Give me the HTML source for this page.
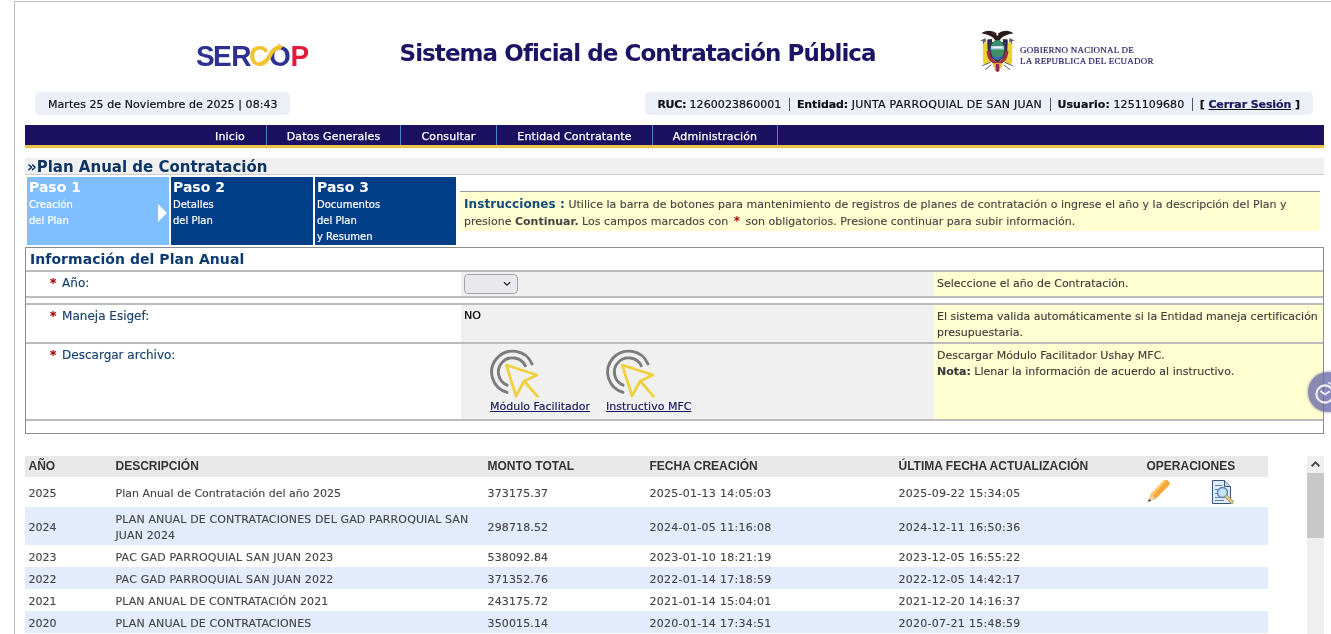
<!DOCTYPE html>
<html lang="es">
<head>
<meta charset="utf-8">
<title>Sistema Oficial de Contratación Pública</title>
<style>
*{box-sizing:border-box}
html,body{margin:0;padding:0;background:#fff;overflow:hidden}
body{width:1331px;height:634px;position:relative;will-change:transform;font-family:"DejaVu Sans","Liberation Sans",sans-serif;font-size:11px;color:#333}
a{color:#1a1a6e}
#wrap{position:absolute;left:14px;top:1px;width:1400px;height:700px;border-left:1px solid #bdbdbd;border-top:1px solid #bdbdbd}
.abs{position:absolute}
#title{left:399.5px;top:38px;margin:0;font:bold 23px/30px "DejaVu Sans","Liberation Sans",sans-serif;color:#1b1464;letter-spacing:-0.93px;white-space:nowrap}
#gob{left:1020px;top:45px;font:9px/10.5px "Liberation Serif",serif;color:#231b63;white-space:nowrap;letter-spacing:.22px;-webkit-text-stroke:.2px #231b63}
.pill{top:92px;height:23px;background:#ebeff8;border-radius:5px;line-height:25px;font-size:11px;color:#111;white-space:nowrap;padding:0 13px;letter-spacing:.07px;-webkit-text-stroke:.2px #111}
#pill1{left:35px;width:255px}
#pill2{left:645px;width:668px;padding-left:12.5px}
#pill2 b{font-weight:bold}
#pill2 .sep{display:inline-block;width:1px;height:13px;background:#555;vertical-align:-3px;margin:0 3.43px 0 3.93px}
#nav{left:25px;top:125px;width:1299px;height:23px;background:#1c1061;border-bottom:3px solid #eec24f;box-shadow:0 1px 0 #fff5d8;margin:0;padding:0;list-style:none;color:#fff;font-size:11px;line-height:23px;white-space:nowrap;letter-spacing:.15px;-webkit-text-stroke:.25px #fff}
#nav li{position:absolute;top:0;height:20px;text-align:center;border-right:1px solid #4d7fd0}
#ptitle{left:25px;top:158px;width:1299px;height:17px;background:#f0f0f0;border-bottom:1px solid #ccc;margin:0;font:bold 15px/19px "DejaVu Sans",sans-serif;color:#0c3563;padding-left:2px;white-space:nowrap}
.step{top:177px;height:68px;color:#fff;padding:2px 0 0 2px;font-size:10px;line-height:16px;-webkit-text-stroke:.2px #fff}
.step b{display:block;font:bold 14px/17px "DejaVu Sans",sans-serif;margin-bottom:1px;-webkit-text-stroke:0}
#s1{left:27px;width:142px;background:#80bfff}
#s1:after{content:"";position:absolute;left:131px;top:26.5px;border-left:9px solid #fff;border-top:9px solid transparent;border-bottom:9px solid transparent}
#s2{left:171px;width:142px;background:#003f87}
#s3{left:315px;width:141px;background:#003f87}
#instr{left:460px;top:191px;width:860px;height:40px;border-top:1px solid #999;background:#ffffd2;padding:4px 4px 0;font-size:11px;line-height:17px;color:#444;letter-spacing:.02px;-webkit-text-stroke:.12px #444}
#instr .h{font:bold 12px "DejaVu Sans",sans-serif;color:#134a7c;-webkit-text-stroke:0;letter-spacing:.08px}
#instr .r{color:#a00;font-weight:bold;font-size:12px;line-height:11px;margin:0 2px;-webkit-text-stroke:0}
#instr b{letter-spacing:0;-webkit-text-stroke:0}
#form{left:25px;top:247px;width:1299px;height:187px;border:1px solid #8c8c8c;border-collapse:separate;border-spacing:0;table-layout:fixed;font-size:11px}
#form td{padding:0;vertical-align:top;border-top:2px solid #bcbcbc}
#form th{padding:0 0 0 4px;letter-spacing:.05px;text-align:left;font:bold 14px/22px "DejaVu Sans",sans-serif;color:#0d3b6e;height:22px}
#form .lb{color:#173f6b;-webkit-text-stroke:.15px #173f6b;font-size:12px;padding:4px 0 0 24px;line-height:15px}
#form .lb i{font-style:normal;color:#a80000;font-weight:bold;margin-right:2px;-webkit-text-stroke:.2px #a80000}
#form .in{background:#f0f0f0;padding:0 0 0 3px;color:#000;-webkit-text-stroke:.2px #000}
#form .hp{background:#ffffd2;padding:4px 0 0 3px;color:#3a3a3a;line-height:16px;letter-spacing:0;-webkit-text-stroke:.12px #3a3a3a}
.selw{display:block;width:54px;height:20px;margin:2px 0 0 0;position:relative}
#sel{display:block;width:54px;height:20px;margin:0;padding:0;border:1px solid #a2a2a8;border-radius:4px;background:#e9e9ed;-webkit-appearance:none;appearance:none;font:11px "DejaVu Sans",sans-serif;outline:0}
.selw svg{position:absolute;left:38.7px;top:7px;pointer-events:none}
.dl{position:relative;height:0}
.lnk{top:56px;font-size:11px;white-space:nowrap;color:#15155f;-webkit-text-stroke:.15px #15155f}
#list{left:25px;top:456px;width:1243px;border-collapse:collapse;table-layout:fixed;font-size:11px;color:#444;letter-spacing:.13px}
#list th{background:#e8e8e8;font:bold 12px/21px "Liberation Sans",sans-serif;color:#333;text-align:left;padding:0 0 0 3.5px;height:21px;letter-spacing:0}
#list td{padding:3px 0 0 3.5px;line-height:16px;vertical-align:middle;-webkit-text-stroke:.12px #444}
#list td.d{letter-spacing:.27px}
#list tr.e td{background:#e3ecfc}
#sb{left:1307px;top:456px;width:17px;height:200px;background:#efefef}
#sb i{position:absolute;left:0;top:17px;width:17px;height:65px;background:#c8c8c8}
#sb svg{position:absolute;left:3px;top:3.5px}
#fab{left:1308px;top:372px;width:40px;height:40px;border-radius:50%;background:rgba(98,98,165,.75);box-shadow:0 0 3px rgba(80,80,130,.7)}
#fab svg{position:absolute;left:6px;top:8px}
</style>
</head>
<body>
<div id="wrap"></div>
<svg id="logo" class="abs" style="left:190px;top:35px;width:130px;height:40px" viewBox="0 0 130 40" role="img" aria-label="SERCOP">
<text transform="scale(.95 1)" y="31" font-family="Liberation Sans, sans-serif" font-weight="bold" font-size="29.5" x="6.4 24.3 43.4 62.2 83.2 105.7"><tspan fill="#2e3192">SER</tspan><tspan fill="#f2c230">C</tspan><tspan fill="#2e3192">O</tspan><tspan fill="#e31b3c">P</tspan></text>
<path d="M69 29 C75 29 78 24 80 20.5 C82 16 85 13 89 12.6" fill="none" stroke="#f2c230" stroke-width="4.2"/>
<path d="M87.5 8.2 L93 11.2 L89.5 15.8 Z" fill="#f2c230"/>
</svg>
<svg id="coat" class="abs" style="left:972px;top:22px;width:52px;height:56px" viewBox="0 0 52 56" aria-hidden="true">
<path d="M11.5 18 L13 41.5 M39.5 18 L38 41.5" stroke="#4a4038" stroke-width="1"/>
<path d="M8.5 18.5 L13.5 16 L14 20.5 Z M42.5 18.5 L37.5 16 L37 20.5 Z" fill="#6a6258"/>
<path d="M10.8 22 L17.5 19.5 L19 39 L14.5 42.8 L11 41 Z" fill="#ead32f"/>
<path d="M40.2 22 L33.5 19.5 L32 39 L36.500 42.800 L40 41 Z" fill="#ead32f"/>
<path d="M15.2 17.500 L20 17 L20 36 L16 33 Z" fill="#2b2a4e"/>
<path d="M35.800 17.500 L31 17 L31 36 L35 33 Z" fill="#2b2a4e"/>
<path d="M17 20 L34 20 L34 34 L25.5 41 L17 34 Z" fill="#3a3550"/>
<path d="M16.2 29 C16.5 37 21 41 25.500 41.500 C30 41 34.500 37 34.800 29" fill="none" stroke="#a5303f" stroke-width="3.200"/>
<ellipse cx="25.500" cy="27.600" rx="6.700" ry="10.200" fill="#3f8f66"/>
<path d="M19.200 24 C21 17.500 30 17.500 31.800 24 Z" fill="#3a8c78"/>
<path d="M19 24 L32 24 L32.200 27.400 L18.800 27.400 Z" fill="#a8cfe9"/>
<path d="M20.500 25.200 H30.500" stroke="#fff" stroke-width="1.100"/>
<path d="M19.700 32.500 C22 35.500 29 35.500 31.300 32.500 C30.500 35.800 28 37.500 25.500 37.800 C23 37.500 20.500 35.800 19.700 32.500 Z" fill="#3b72b4"/>
<path d="M20.500 41.300 L30.500 41.300 L29.500 46 L21.500 46 Z" fill="#e3c934"/>
<path d="M23.800 42 L27.200 42 L27.600 48.500 L25.500 50.200 L23.400 48.500 Z" fill="#a3244e"/>
<path d="M10.200 43.700 L18.500 40.300 M13 47.600 L19.500 42.800 M40.800 43.700 L32.500 40.300 M38 47.600 L31.500 42.800" stroke="#5a5048" stroke-width=".9"/>
<path d="M9.300 11.200 C12.500 8.800 17 7.900 21 9.600 C23 10.400 24.300 11.300 25.400 12.300 C26.500 11.300 27.800 10.400 29.800 9.600 C33.800 7.900 38.300 8.800 41.500 11.200 C38.500 11.600 35.500 12.600 32.500 14 C30.500 15 28.800 16.500 27.600 18.300 L23.200 18.300 C22 16.500 20.300 15 18.300 14 C15.300 12.600 12.300 11.600 9.300 11.200 Z" fill="#2c1b1b"/>
<circle cx="25.300" cy="12.600" r="1.100" fill="#f2efe9"/>
</svg>
<h1 id="title" class="abs">Sistema Oficial de Contratación Pública</h1>
<div id="gob" class="abs">GOBIERNO NACIONAL DE<br>LA REPUBLICA DEL ECUADOR</div>
<div id="pill1" class="abs pill">Martes 25 de Noviembre de 2025 | 08:43</div>
<div id="pill2" class="abs pill"><b style="letter-spacing:-.35px">RUC:</b> 1260023860001 <span class="sep"></span> <b style="letter-spacing:-.1px">Entidad:</b> <span style="letter-spacing:.25px">JUNTA PARROQUIAL DE SAN JUAN</span> <span class="sep"></span> <b>Usuario:</b> 1251109680 <span class="sep"></span> <b style="letter-spacing:-.1px">[ <a href="#">Cerrar Sesión</a> ]</b></div>
<ul id="nav" class="abs">
<li style="left:0;width:242px;padding-left:169px">Inicio</li>
<li style="left:242px;width:134px">Datos Generales</li>
<li style="left:376px;width:96px">Consultar</li>
<li style="left:472px;width:156px">Entidad Contratante</li>
<li style="left:628px;width:125px">Administración</li>
</ul>
<h2 id="ptitle" class="abs">»Plan Anual de Contratación</h2>
<div id="s1" class="abs step"><b>Paso 1</b>Creación<br>del Plan</div>
<div id="s2" class="abs step"><b>Paso 2</b>Detalles<br>del Plan</div>
<div id="s3" class="abs step"><b>Paso 3</b>Documentos<br>del Plan<br>y Resumen</div>
<div id="instr" class="abs"><span class="h">Instrucciones :</span> Utilice la barra de botones para mantenimiento de registros de planes de contratación o ingrese el año y la descripción del Plan y presione <b>Continuar.</b> Los campos marcados con <span class="r">*</span> son obligatorios. Presione continuar para subir información.</div>
<table id="form" class="abs">
<colgroup><col style="width:435px"><col style="width:473px"><col></colgroup>
<tr><th colspan="3">Información del Plan Anual</th></tr>
<tr style="height:26px"><td class="lb"><i>*</i> Año:</td><td class="in"><span class="selw"><select id="sel" name="anio"><option value=""></option></select><svg width="8" height="6" viewBox="0 0 8 6"><path d="M1 1.2 L4 4.2 L7 1.2" fill="none" stroke="#222" stroke-width="1.3"/></svg></span></td><td class="hp">Seleccione el año de Contratación.</td></tr>
<tr style="height:7px"><td colspan="3"></td></tr>
<tr style="height:39px"><td class="lb"><i>*</i> Maneja Esigef:</td><td class="in"><div style="padding-top:4px">NO</div></td><td class="hp">El sistema valida automáticamente si la Entidad maneja certificación presupuestaria.</td></tr>
<tr style="height:77px"><td class="lb"><i>*</i> Descargar archivo:</td><td class="in"><div class="dl"><svg class="abs ico" style="left:16px;top:-4px;width:64px;height:64px" viewBox="0 0 64 64" aria-hidden="true"><path d="M52 24 A21 21 0 1 0 27.1 52.4" fill="none" stroke="#7b7b7b" stroke-width="2.9" stroke-linecap="round"/><path d="M45.3 25.8 A14.2 14.2 0 1 0 27.1 45.2" fill="none" stroke="#7b7b7b" stroke-width="2.9" stroke-linecap="round"/><path d="M26.3 25 L57 35 L44.2 41 L36 56 Z M44.2 41 L57.5 56.3" fill="none" stroke="#efcf3c" stroke-width="2.7" stroke-linejoin="round" stroke-linecap="round"/></svg><svg class="abs ico" style="left:131.8px;top:-4px;width:64px;height:64px" viewBox="0 0 64 64" aria-hidden="true"><path d="M52 24 A21 21 0 1 0 27.1 52.4" fill="none" stroke="#7b7b7b" stroke-width="2.9" stroke-linecap="round"/><path d="M45.3 25.8 A14.2 14.2 0 1 0 27.1 45.2" fill="none" stroke="#7b7b7b" stroke-width="2.9" stroke-linecap="round"/><path d="M26.3 25 L57 35 L44.2 41 L36 56 Z M44.2 41 L57.5 56.3" fill="none" stroke="#efcf3c" stroke-width="2.7" stroke-linejoin="round" stroke-linecap="round"/></svg><a class="abs lnk" href="#" style="left:26px">Módulo Facilitador</a><a class="abs lnk" href="#" style="left:142px">Instructivo MFC</a></div></td><td class="hp">Descargar Módulo Facilitador Ushay MFC.<br><b>Nota:</b> Llenar la información de acuerdo al instructivo.</td></tr>
<tr style="height:14px"><td colspan="3"></td></tr>
</table>
<table id="list" class="abs">
<colgroup><col style="width:87px"><col style="width:372px"><col style="width:162px"><col style="width:249px"><col style="width:248px"><col style="width:125px"></colgroup>
<tr><th>AÑO</th><th>DESCRIPCIÓN</th><th>MONTO TOTAL</th><th>FECHA CREACIÓN</th><th>ÚLTIMA FECHA ACTUALIZACIÓN</th><th>OPERACIONES</th></tr>
<tr style="height:30px"><td style="letter-spacing:0">2025</td><td style="letter-spacing:0">Plan Anual de Contratación del año 2025</td><td>373175.37</td><td class="d">2025-01-13 14:05:03</td><td class="d">2025-09-22 15:34:05</td><td style="vertical-align:top"><div class="dl"><svg class="abs" style="left:-.5px;top:-2px;width:26px;height:26px" viewBox="0 0 26 26" aria-hidden="true"><path d="M2.2 23.8 L4.7 16 L17.9 2.3 Q20.5 1 22.5 3 Q24.6 5 23.3 7 L9.7 20.9 Z" fill="#f4a63a"/><path d="M4.7 16 L17.9 2.3 Q19.3 1.600 20.600 2.200 L6.800 17.800 Z" fill="#fcc868"/><path d="M2.200 23.800 L4.700 16 Q7.500 17.500 9.700 20.900 Z" fill="#f0cfa8"/><path d="M2.200 23.800 L3.100 21 L5 22.700 Z" fill="#2a2a2a"/></svg><svg class="abs" style="left:64.5px;top:-1px;width:24px;height:27px" viewBox="0 0 24 27" aria-hidden="true"><path d="M1.500 1.500 L13.500 1.500 L19.500 7.500 L19.500 24.500 L1.500 24.500 Z" fill="#dfeaf6" stroke="#34587f" stroke-width="1"/><path d="M13.500 1.500 L13.500 7.500 L19.500 7.500" fill="#c3d6ec" stroke="#34587f" stroke-width="1"/><path d="M4 6.500 H11 M4 10.500 H8 M4 14.500 H7 M4 18.500 H9 M4 21.500 H13" stroke="#5f83b0" stroke-width="1"/><circle cx="11.500" cy="13.500" r="5" fill="#c6e2f7" stroke="#5b82b4" stroke-width="1.400"/><path d="M15.300 17.300 L21 23" stroke="#8a7a4a" stroke-width="3.200" stroke-linecap="round"/><path d="M15.300 17.300 L21 23" stroke="#ecd080" stroke-width="2" stroke-linecap="round"/></svg></div></td></tr>
<tr class="e" style="height:38px"><td style="letter-spacing:0">2024</td><td>PLAN ANUAL DE CONTRATACIONES DEL GAD PARROQUIAL SAN JUAN 2024</td><td>298718.52</td><td class="d">2024-01-05 11:16:08</td><td class="d">2024-12-11 16:50:36</td><td></td></tr>
<tr style="height:22px"><td style="letter-spacing:0">2023</td><td style="letter-spacing:.19px">PAC GAD PARROQUIAL SAN JUAN 2023</td><td>538092.84</td><td class="d">2023-01-10 18:21:19</td><td class="d">2023-12-05 16:55:22</td><td></td></tr>
<tr class="e" style="height:22px"><td style="letter-spacing:0">2022</td><td style="letter-spacing:.19px">PAC GAD PARROQUIAL SAN JUAN 2022</td><td>371352.76</td><td class="d">2022-01-14 17:18:59</td><td class="d">2022-12-05 14:42:17</td><td></td></tr>
<tr style="height:22px"><td style="letter-spacing:0">2021</td><td style="letter-spacing:.1px">PLAN ANUAL DE CONTRATACIÓN 2021</td><td>243175.72</td><td class="d">2021-01-14 15:04:01</td><td class="d">2021-12-20 14:16:37</td><td></td></tr>
<tr class="e" style="height:22px"><td style="letter-spacing:0">2020</td><td>PLAN ANUAL DE CONTRATACIONES</td><td>350015.14</td><td class="d">2020-01-14 17:34:51</td><td class="d">2020-07-21 15:48:59</td><td></td></tr>
</table>
<div id="sb" class="abs"><svg width="11" height="8" viewBox="0 0 11 8"><path d="M1.6 6.3 L5.5 2.4 L9.4 6.3" fill="none" stroke="#4f4f4f" stroke-width="2"/></svg><i></i></div>
<div id="fab" class="abs"><svg width="24" height="26" viewBox="0 0 24 26"><circle cx="11" cy="14" r="8.6" fill="none" stroke="#fff" stroke-width="2.1" opacity=".9"/><path d="M6.5 11 L11 14.5 L16 11.2" fill="none" stroke="#fff" stroke-width="1.8" opacity=".9"/><path d="M14 2.5 L17.5 4" stroke="#fff" stroke-width="1.6" opacity=".8"/></svg></div>
</body>
</html>
